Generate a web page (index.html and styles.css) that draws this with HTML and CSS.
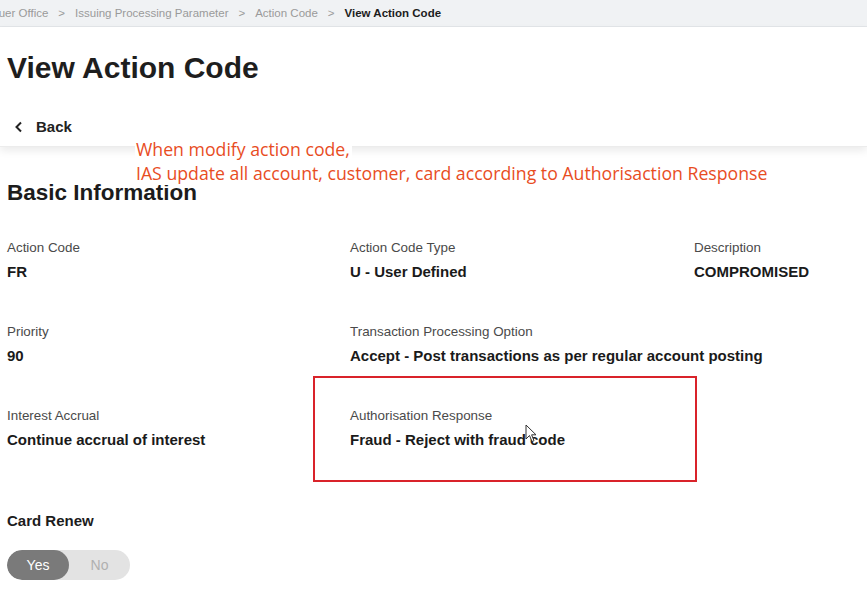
FILE: index.html
```html
<!DOCTYPE html>
<html>
<head>
<meta charset="utf-8">
<link rel="stylesheet" href="styles.css">
</head>
<body>
<div class="crumbs">
  <span class="crumb">Issuer Office</span><span class="sep">&gt;</span>
  <span class="crumb">Issuing Processing Parameter</span><span class="sep">&gt;</span>
  <span class="crumb">Action Code</span><span class="sep">&gt;</span>
  <span class="crumb current">View Action Code</span>
</div>
<header class="head">
  <h1 class="title">View Action Code</h1>
  <a class="back">
    <svg class="chev" width="10" height="12" viewBox="0 0 10 12"><path d="M7 1.5 L2.5 6 L7 10.5" fill="none" stroke="#222" stroke-width="2"/></svg>
    <span>Back</span>
  </a>
</header>
<div class="note">
  <span class="note-line">When modify action code,</span><br>
  <span class="note-line">IAS update all account, customer, card according to Authorisaction Response</span>
</div>
<main class="content">
  <h2 class="section">Basic Information</h2>
  <div class="grid">
    <div class="field"><div class="label">Action Code</div><div class="value">FR</div></div>
    <div class="field"><div class="label">Action Code Type</div><div class="value">U - User Defined</div></div>
    <div class="field"><div class="label">Description</div><div class="value">COMPROMISED</div></div>
    <div class="field"><div class="label">Priority</div><div class="value">90</div></div>
    <div class="field wide"><div class="label">Transaction Processing Option</div><div class="value">Accept - Post transactions as per regular account posting</div></div>
    <div class="field"><div class="label">Interest Accrual</div><div class="value">Continue accrual of interest</div></div>
    <div class="field highlight"><div class="label">Authorisation Response</div><div class="value">Fraud - Reject with fraud code</div>
      <svg class="cursor" width="12" height="20" viewBox="0 0 12 20"><path d="M1 1 L1 15 L4.5 11.5 L7 17.5 L9 16.7 L6.6 10.8 L11 10.8 Z" fill="#fff" stroke="#333" stroke-width="1"/></svg>
    </div>
  </div>
  <div class="renew">
    <div class="renew-label">Card Renew</div>
    <div class="toggle"><span class="opt on">Yes</span><span class="opt">No</span></div>
  </div>
</main>
</body>
</html>
```
FILE: styles.css
```css
html, body { margin: 0; padding: 0; background: #fff; }
body { font-family: "Liberation Sans", Arial, sans-serif; color: #1f1f1f; width: 867px; height: 593px; overflow: hidden; position: relative; }
.crumbs { height: 26px; background: #f0f2f4; border-bottom: 1px solid #e2e5e8; display: flex; align-items: center; font-size: 11.5px; color: #9a9a9a; white-space: nowrap; overflow: hidden; }
.crumbs .crumb:first-child { margin-left: -16px; }
.sep { margin: 0 10px; }
.crumb.current { color: #1c1c1c; font-weight: bold; }
.head { height: 119px; padding: 0 7px; box-shadow: 0 4px 8px rgba(0,0,0,0.08); border-bottom: 1px solid #ececec; display: flex; flex-direction: column; }
.title { margin: 0; margin-top: 24px; font-size: 30px; font-weight: bold; color: #1e1e1e; line-height: 34px; }
.back { display: flex; align-items: center; margin-top: 33px; margin-left: 7px; font-size: 15px; font-weight: bold; color: #222; gap: 12px; }
.note { position: absolute; left: 135px; top: 137px; font-family: "Open Sans", "Noto Sans", sans-serif; font-size: 17.7px; line-height: 24px; color: #e84d1f; }
.note-line { background: #fff; padding: 0 2px 0 1px; }
.content { padding: 0 7px; }
.section { margin: 34px 0 0; font-size: 22.5px; font-weight: bold; color: #1c1c1c; line-height: 24px; }
.grid { display: grid; grid-template-columns: 343px 344px 1fr; margin-top: 35px; row-gap: 44px; }
.field { position: relative; }
.label { font-size: 13.4px; color: #4a4a4a; line-height: 16px; }
.value { font-size: 15px; font-weight: bold; color: #1a1a1a; line-height: 16px; margin-top: 8px; }
.wide { grid-column: span 2; }
.highlight::before { content: ""; position: absolute; left: -37px; top: -32px; width: 380px; height: 102px; border: 2px solid #d9232a; }
.cursor { position: absolute; left: 175px; top: 16px; }
.renew { margin-top: 65px; }
.renew-label { font-size: 15px; font-weight: bold; color: #1c1c1c; line-height: 16px; }
.toggle { margin-top: 21px; display: flex; width: 123px; height: 30px; border-radius: 15px; background: #e3e3e3; overflow: hidden; font-size: 14px; }
.opt { flex: 0 0 61px; display: flex; align-items: center; justify-content: center; color: #b0b0b0; }
.opt.on { flex-basis: 62px; background: #7a7a7a; color: #fff; border-radius: 15px; }
```
